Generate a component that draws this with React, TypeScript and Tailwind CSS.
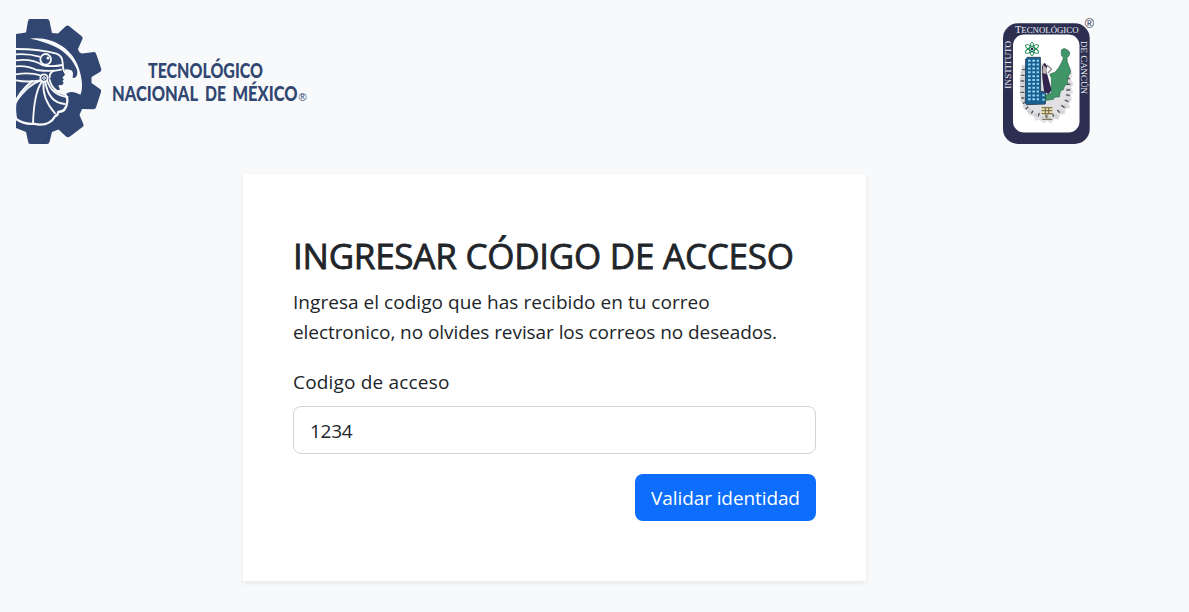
import React, { useState } from "react";

const windowRows = [0, 1, 2, 3, 4, 5, 6, 7, 8, 9, 10];

function TecnmLogo() {
  return (
    <svg viewBox="15 19 295 125" className="h-[125px] w-[295px] overflow-visible" role="img" aria-label="Tecnológico Nacional de México">
      <path
        fill="#314772"
        d="M16 34 L26 32.5 L28 21 Q28.300 19 30 19 L47 19 Q49 19 49.500 21 L52 33 L58 33.500 L66 26 Q67.500 25 69 26 L82 36.500 Q83.500 38 82 40 L78 49 Q79 53 82 53.500 L94 52 Q95.700 52 96.200 54 L101.300 69 Q101.600 71 100 72 L91.500 77 L91.500 83 L100 89 Q101.700 90 101 92 L96 107.500 Q95.500 109.500 93 109.300 L82 109 L79.500 115 L83.500 124.500 Q84 126 82.500 127 L70 136.500 Q68 138 66 136.500 L58.500 129.500 L52 132 L49.500 142 Q49 144 47 144 L30 144 Q28.500 144 28.200 142 L26 132 L16 128 Z"
      />
      <g transform="translate(10 30) scale(.33333)" fill="none" stroke="#f8f9fa" strokeWidth="5.500" strokeLinecap="round">
        <path
          fill="#f8f9fa"
          stroke="none"
          d="M60 26 C124 17 188 54 207 116 C218 150 219 180 211 194 C196 187 177 180 165 196 C151 194 137 188 130 180 L150 180 L145 166 L157 165 L161 158 L157 153 L162 149 L157 143 L165 134 L161 126 L168 117 L184 121 C191 126 189 135 188 144 C200 144 204 133 201 119 C180 65 128 39 60 26Z"
        />
        <path d="M18 57 C60 57 105 61 139 71 Q158 78 158 99 Q158 115 162 123" />
        <path d="M18 73 C45 71 67 74 88 80" />
        <path d="M18 91 C53 86 75 91 97 105 Q124 112 157 105" />
        <path d="M18 109 Q50 105 80 120 Q125 126 153 119" />
        <path d="M18 133 Q60 126 94 137 M18 151 Q55 158 91 151" />
        <circle cx="107" cy="88" r="16" />
        <circle cx="114" cy="84" r="4.500" fill="#f8f9fa" stroke="none" />
        <circle cx="102" cy="144" r="11" fill="#314772" />
        <circle cx="102" cy="144" r="4" strokeWidth="3" />
        <path d="M119 143 Q118 128 132 122" />
        <path d="M119 150 Q124 172 142 184" />
        <path d="M91 152 Q54 164 17 216 M96 155 Q72 187 69 281 M101 157 Q95 204 135 250" />
        <path d="M106 156 Q116 218 164 222 M112 153 Q126 196 173 201" />
        <path d="M66 154 Q25 188 16 220 Q13 240 18 267 Q44 284 70 281 Q116 293 136 258 Q143 257 145 246 Q168 245 171 219 Q175 205 166 194" strokeWidth="7" />
      </g>
      <g fill="#314772" fontFamily="Lato, sans-serif" fontWeight="900">
        <text x="148" y="77.700" fontSize="20.500" textLength="115" lengthAdjust="spacingAndGlyphs">TECNOLÓGICO</text>
        <text x="112" y="100.500" fontSize="20.500" textLength="86" lengthAdjust="spacingAndGlyphs">NACIONAL</text>
        <text x="205" y="100.500" fontSize="20.500" textLength="21" lengthAdjust="spacingAndGlyphs">DE</text>
        <text x="232.500" y="100.500" fontSize="20.500" textLength="65" lengthAdjust="spacingAndGlyphs">MÉXICO</text>
        <text x="298.500" y="101" fontSize="11" fontWeight="400" fontFamily="'Liberation Sans', sans-serif">®</text>
      </g>
    </svg>
  );
}

function CancunLogo() {
  return (
    <svg viewBox="1003 19 92 125" className="h-[125px] w-[92px] overflow-visible" role="img" aria-label="Instituto Tecnológico de Cancún">
      <rect x="1003" y="23.300" width="86.700" height="120.700" rx="15" fill="#2c2f50" />
      <rect x="1013" y="34.500" width="66.500" height="98" rx="11" fill="#fff" />
      <g fill="#eceef3" fontFamily="'Liberation Serif', serif">
        <text x="1015" y="33" fontSize="9.500" textLength="63.500" lengthAdjust="spacingAndGlyphs">
          T<tspan fontSize="8">ECNOLÓGICO</tspan>
        </text>
        <text transform="translate(1011.200 89) rotate(-90)" fontSize="9" textLength="48" lengthAdjust="spacingAndGlyphs">
          I<tspan fontSize="7.700">NSTITUTO</tspan>
        </text>
        <text transform="translate(1081 41) rotate(90)" fontSize="9" textLength="53" lengthAdjust="spacingAndGlyphs">
          <tspan fontSize="7.700">DE </tspan>C<tspan fontSize="7.700">ANCÚN</tspan>
        </text>
      </g>
      <text x="1084.700" y="28.300" fontSize="12.500" fill="#2c2f50" fontFamily="'Liberation Sans', sans-serif">®</text>
      <g transform="translate(1000 35) scale(.33333)">
        <path
          d="M64 148 Q66 103 79 85 L139 85 L139 195 L205 120 L202 80 Q216 98 218 122 L212 132 L221 146 L213 158 L220 170 L211 181 L217 193 L207 204 L211 218 L197 222 L195 237 L181 239 L176 254 L164 251 L153 266 L143 258 L130 265 L120 255 L107 257 L101 243 L87 241 L83 228 L70 222 L72 209 L60 199 L66 187 L58 175 L65 162 Z"
          fill="#e1e1e3"
        />
        <path
          d="M66 96 h12 m-16 17 h14 m-16 17 h15 m-15 17 h15 m-15 17 h15 m-14 17 h14 m-10 17 l12 -4 m-7 22 l12 -8 m3 25 l7 -11 m13 23 l4 -11 m17 20 l1 -11 m22 13 l-2 -12 m25 5 l-6 -11 m23 -3 l-9 -9 m23 -9 l-12 -6 m19 -12 l-13 -4 m15 -14 h-13 m15 -17 h-14 m14 -17 h-13 m10 -17 h-12 m9 -17 h-9 m3 -14 l-7 2"
          stroke="#d2d2d5"
          strokeWidth="10"
          fill="none"
        />
        <path
          d="M65 104h10m-13 17h12m-13 17h12m-12 17h12m-12 17h12m-10 17h10m-5 17l9-5m0 22l8-8m9 21l5-9m16 17l3-10m20 14v-10m23 7l-4-10m22-2l-7-8m22-7l-10-7m21-11l-11-5m15-13l-11-3m12-14h-11m12-17h-12m11-17h-11m8-17h-11"
          fill="none"
          stroke="#53545b"
          strokeWidth="4"
        />
        <path d="M77 72 L82 67 L121 67 L122 169 L137 171 L136 207 L80 209 L76 204 Z" fill="#195f91" stroke="#304b64" strokeWidth="3" />
        {windowRows.map((row) => (
          <path key={row} d={`M84 ${77 + row * 11.6}h8m5 0h8m5 0h7`} stroke="#91d8f4" strokeWidth="6" />
        ))}
        <path d="M127 181h7m-7 13h7" stroke="#91d8f4" strokeWidth="6" />
        <path d="M126 94 L134 83 L142 94 L139 108 L155 166 L145 178 L132 169 L127 130 Z" fill="#33234f" />
        <path d="M129 90l12 10-2 18-11-4Z" fill="#bcb5b4" />
        <path d="M140 90l15 12m-11 12 11-12" stroke="#8f8890" strokeWidth="4" fill="none" />
        <path
          d="M184 45 Q192 36 202 45 Q214 51 206 64 L201 67 Q200 82 206 92 L211 106 Q213 116 206 121 L202 135 L204 146 Q191 151 191 163 L181 169 L178 186 L165 186 L160 193 L137 196 L137 181 L154 174 L154 128 L149 118 L166 111 Q179 97 187 78 Q194 68 184 60 Z"
          fill="#409668"
          stroke="#286648"
          strokeWidth="2"
        />
        <g fill="none" stroke="#198351" strokeWidth="3">
          <ellipse cx="96" cy="42" rx="7" ry="20" />
          <ellipse cx="96" cy="42" rx="7" ry="22" transform="rotate(60 96 42)" />
          <ellipse cx="96" cy="42" rx="7" ry="22" transform="rotate(120 96 42)" />
        </g>
        <circle cx="96" cy="42" r="4" fill="#332950" />
        <path d="M125 216h32v24h-32Z" fill="#e8dba9" />
        <path d="M125 218h32m-32 9h32m-32 9h32m-21-18v20m10-20v20m-5 0v12m-14 3h30" stroke="#706849" strokeWidth="3" fill="none" />
      </g>
    </svg>
  );
}

export default function App() {
  const [code, setCode] = useState("1234");

  return (
    <div className="h-[612px] overflow-hidden bg-[#f8f9fa] font-['Open_Sans',sans-serif] text-[#212529]">
      <header className="flex h-[174px] justify-between pt-[19px] pr-[94px] pl-[15px]">
        <TecnmLogo />
        <CancunLogo />
      </header>
      <main className="ml-[243px] h-[407px] w-[623px] bg-white px-[50px] pt-[61px] shadow-[0_2px_5px_rgba(0,0,0,0.075)]">
        <h1 className="text-[35px] leading-[42px] font-medium tracking-[-0.25px] whitespace-nowrap [-webkit-text-stroke:0.8px_#212529]">INGRESAR CÓDIGO DE ACCESO</h1>
        <p className="mt-[10px] text-[19px] leading-[30px] whitespace-nowrap">
          <span className="block tracking-[0.04px]">Ingresa el codigo que has recibido en tu correo</span>
          <span className="block tracking-[-0.07px]">electronico, no olvides revisar los correos no deseados.</span>
        </p>
        <form onSubmit={(event) => event.preventDefault()}>
          <label htmlFor="code" className="mt-5 block text-[19px] leading-[30px] tracking-[0.18px]">Codigo de acceso</label>
          <input
            id="code"
            value={code}
            onChange={(event) => setCode(event.target.value)}
            className="mt-[9px] block h-12 w-full rounded-lg border border-[#ced4da] bg-white px-4 pt-0.5 text-[19px] tracking-[-0.3px] outline-none"
          />
          <div className="mt-5 flex justify-end">
            <button className="h-[47px] w-[181px] rounded-lg bg-[#0d6efd] pt-px text-[19px] tracking-[-0.1px] whitespace-nowrap text-white">Validar identidad</button>
          </div>
        </form>
      </main>
    </div>
  );
}
